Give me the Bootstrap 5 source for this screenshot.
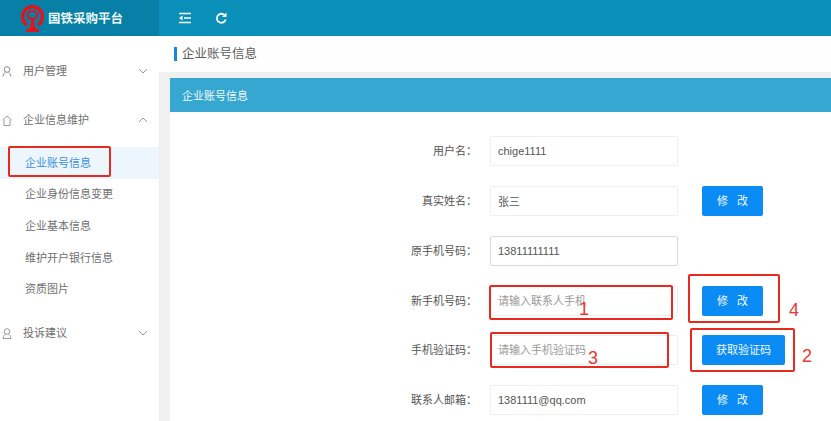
<!DOCTYPE html>
<html lang="zh"><head><meta charset="utf-8"><title>企业账号信息</title>
<link href="https://cdn.jsdelivr.net/npm/bootstrap@5.3.0/dist/css/bootstrap.min.css" rel="stylesheet">
<style>
html,body{height:421px;overflow:hidden}
body{font-family:"Liberation Sans","Noto Sans CJK SC",sans-serif;font-size:11px;color:#555;background:#fff}
.shell{width:831px;height:421px;overflow:hidden}
.topbar{height:36px;background:#0a8fb8;color:#fff}
.brand{width:159px;height:36px;background:#077fa6;padding-left:21px}
.brand-name{font-family:"Noto Sans CJK SC",sans-serif;font-size:12.500px;font-weight:700;margin-left:4px;color:#eef7fa}
.tools{padding-left:19px;gap:23px}
.side{width:159px;height:385px;background:#fff;flex:none}
.menu-head{height:32px;padding:0 11px 0 2px;color:#707070;font-size:11px}
.menu-head .lbl{margin-left:11px;flex:1}
.m1{margin-top:19px}.m2{margin-top:17px}.m3{margin-top:12px}
.sub{height:31.700px;padding-left:25px;color:#707070;display:flex;align-items:center}
.sub.on{background:#edf6fd;color:#3b8fe0}
.subs{margin-top:11px}
.main{flex:1;background:#f0f0f0;height:385px}
.crumb{height:36px;background:#fff;padding-left:15px;font-size:12.500px;color:#5c5c5c}
.crumb i{display:block;width:3px;height:14px;background:#1b84e0;margin-right:5px;margin-top:-1px}
.panel{margin:6px 0 0 11px;background:#fff;height:343px}
.panel-h{height:34px;background:#36a7d1;color:#f2fafd;padding:2px 0 0 12px;font-size:11px}
.frm{padding-top:24px}
.frow{height:30px;margin-bottom:20px}
.frow.tight{margin-bottom:19px}
.flabel{width:320px;text-align:right;font-size:11px;color:#555;padding-right:13px;flex:none}
.fin{width:188px;height:30px;flex:none;border:1px solid #eee;border-radius:2px;padding:0 7px;font-size:11px;color:#555;background:#fff;font-family:inherit;outline:0}
.fin.dk{border-color:#d9d9d9}
.fin::placeholder{color:#999}
.bt{width:61px;height:30px;margin-left:24px;background:#0b8cf5;color:#f3f9ff;border:0;border-radius:2px;font-size:11px;padding:0}
.bt.wide{width:83px}
.note{position:absolute;border:2px solid #e8291f;border-radius:2px}
.n-menu{left:8px;top:146px;width:103px;height:31px}
.n-phone{left:489px;top:285px;width:184px;height:35px}
.n-edit{left:688px;top:274px;width:92px;height:49px}
.n-code{left:490px;top:332px;width:179px;height:36px}
.n-get{left:690px;top:328px;width:105px;height:44px}
.num{position:absolute;color:#e8392e;font-size:18px;line-height:18px}
.d1{left:579px;top:300px}.d2{left:802px;top:347px}.d3{left:588px;top:349px}.d4{left:789px;top:301px}
</style></head><body>
<div class="shell position-relative">
<div class="topbar d-flex align-items-center">
 <div class="brand d-flex align-items-center">
  <svg width="23" height="29" viewBox="0 0 23 29" aria-hidden="true"><path d="M6 21a10 10 0 1 1 11 0" fill="none" stroke="#e0141a" stroke-width="3.500"/><path d="M6.500 12a5 5 0 0 1 10 0c0 1-1 2-2 2.500H8.500c-1-.5-2-1.500-2-2.500z" fill="none" stroke="#e0141a" stroke-width="2"/><path d="M10 14h3c0 5 .5 8 2 11H8c1.500-3 2-6 2-11zM5 25h13v3H5z" fill="#e0141a"/></svg>
  <span class="brand-name">国铁采购平台</span>
 </div>
 <div class="tools d-flex align-items-center">
  <svg width="14" height="12" viewBox="0 0 14 12" aria-hidden="true"><path d="M1 1.500h12M6 6h7M1 10.500h12" stroke="#fff" stroke-width="1.500" fill="none"/><path d="M4.500 3.500v5L1 6z" fill="#fff"/></svg>
  <svg width="13" height="13" viewBox="0 0 13 13" aria-hidden="true"><path d="M10.700 7.500A4.500 4.500 0 1 1 9.500 3" stroke="#fff" stroke-width="1.800" fill="none"/><path d="M11.500 0.500v4.500H7z" fill="#fff"/></svg>
 </div>
</div>
<div class="d-flex">
 <nav class="side">
  <div class="menu-head m1 d-flex align-items-center">
   <svg width="10" height="11" viewBox="0 0 10 11" aria-hidden="true"><circle cx="5" cy="3.500" r="2.800" fill="none" stroke="#888"/><path d="M1 10.500c.5-3 2-4 2.500-4.500M9 10.500c-.5-3-2-4-2.500-4.500" fill="none" stroke="#888"/></svg>
   <span class="lbl">用户管理</span>
   <svg width="10" height="6" viewBox="0 0 10 6" aria-hidden="true"><path d="M1 1l4 4 4-4" fill="none" stroke="#999"/></svg>
  </div>
  <div class="menu-head m2 d-flex align-items-center">
   <svg width="10" height="11" viewBox="0 0 10 11" aria-hidden="true"><path d="M.5 5L5 1l4.500 4M2 4.500v6h6v-6" fill="none" stroke="#999"/></svg>
   <span class="lbl">企业信息维护</span>
   <svg width="10" height="6" viewBox="0 0 10 6" aria-hidden="true"><path d="M1 5l4-4 4 4" fill="none" stroke="#999"/></svg>
  </div>
  <div class="subs">
   <div class="sub on">企业账号信息</div>
   <div class="sub">企业身份信息变更</div>
   <div class="sub">企业基本信息</div>
   <div class="sub">维护开户银行信息</div>
   <div class="sub">资质图片</div>
  </div>
  <div class="menu-head m3 d-flex align-items-center">
   <svg width="10" height="11" viewBox="0 0 10 11" aria-hidden="true"><circle cx="5" cy="3.500" r="2.800" fill="none" stroke="#999"/><path d="M1 10.500c.5-3 2-4 2.500-4.500M9 10.500c-.5-3-2-4-2.500-4.500M1 10.500h8" fill="none" stroke="#999"/></svg>
   <span class="lbl">投诉建议</span>
   <svg width="10" height="6" viewBox="0 0 10 6" aria-hidden="true"><path d="M1 1l4 4 4-4" fill="none" stroke="#999"/></svg>
  </div>
 </nav>
 <main class="main">
  <div class="crumb d-flex align-items-center"><i></i>企业账号信息</div>
  <section class="panel">
   <div class="panel-h d-flex align-items-center">企业账号信息</div>
   <form class="frm">
    <div class="frow d-flex align-items-center"><label class="flabel">用户名：</label><input class="fin" value="chige1111"></div>
    <div class="frow d-flex align-items-center"><label class="flabel">真实姓名：</label><input class="fin" value="张三"><button type="button" class="bt">修&nbsp;&nbsp;&nbsp;改</button></div>
    <div class="frow d-flex align-items-center"><label class="flabel">原手机号码：</label><input class="fin dk" value="13811111111"></div>
    <div class="frow tight d-flex align-items-center"><label class="flabel">新手机号码：</label><input class="fin" placeholder="请输入联系人手机"><button type="button" class="bt">修&nbsp;&nbsp;&nbsp;改</button></div>
    <div class="frow d-flex align-items-center"><label class="flabel">手机验证码：</label><input class="fin" placeholder="请输入手机验证码"><button type="button" class="bt wide">获取验证码</button></div>
    <div class="frow d-flex align-items-center"><label class="flabel">联系人邮箱：</label><input class="fin" value="1381111@qq.com"><button type="button" class="bt">修&nbsp;&nbsp;&nbsp;改</button></div>
   </form>
  </section>
 </main>
</div>
<div class="note n-menu"></div>
<div class="note n-phone"></div>
<div class="note n-edit"></div>
<div class="note n-code"></div>
<div class="note n-get"></div>
<span class="num d1">1</span>
<span class="num d2">2</span>
<span class="num d3">3</span>
<span class="num d4">4</span>
</div>
<script src="https://cdn.jsdelivr.net/npm/bootstrap@5.3.0/dist/js/bootstrap.bundle.min.js"></script>
</body></html>
